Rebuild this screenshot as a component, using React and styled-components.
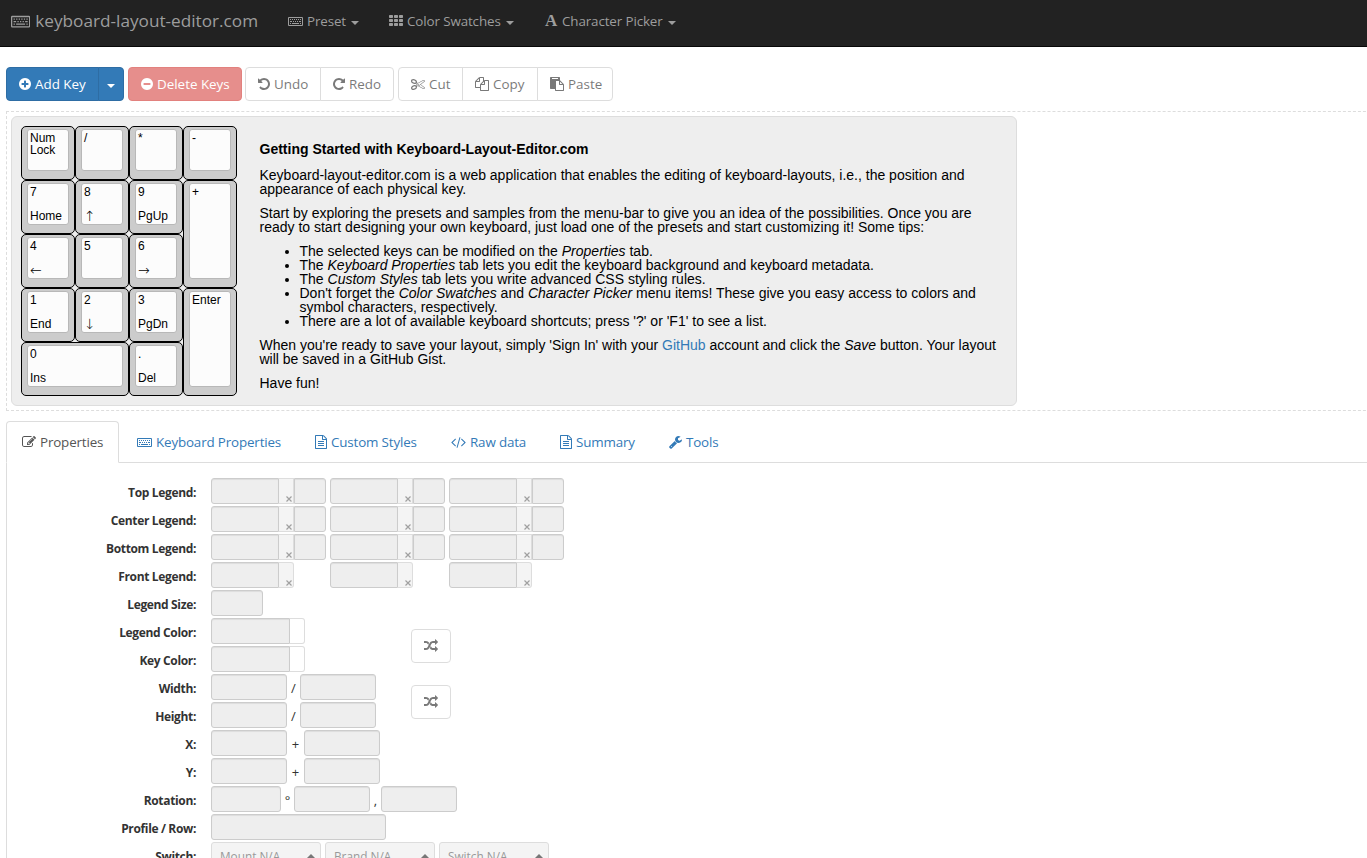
import React from 'react';
import styled, { createGlobalStyle, css } from 'styled-components';

const Global = createGlobalStyle`
  *, *::before, *::after { box-sizing: border-box; }
  html, body { margin: 0; height: 858px; overflow: hidden; background: #fff; }
  body {
    font-family: 'Open Sans', 'Noto Sans', sans-serif;
    font-size: 13.4px;
    line-height: 20px;
    color: #333;
  }
`;

const Page = styled.div`
  height: 858px;
  overflow: hidden;
`;

const Glyph = styled.svg`
  display: block;
  flex: none;
  fill: currentColor;
`;

const DISC =
  'm320-64q0 209-103 385.5t-279.5 279.5-385.5 103-385.5-103-279.5-279.5-103-385.5 103-385.5 279.5-279.5 385.5-103 385.5 103 279.5 279.5 103 385.5z';

/* [left edge, width, path] in a 1792-unit em */
const ICONS = {
  plus: [128, 1536, 'M1344 960v-128q0-26-19-45t-45-19h-256v-256q0-26-19-45t-45-19h-128q-26 0-45 19t-19 45v256h-256q-26 0-45 19t-19 45v128q0 26 19 45t45 19h256v256q0 26 19 45t45 19h128q26 0 45-19t19-45v-256h256q26 0 45-19t19-45z' + DISC],
  minus: [128, 1536, 'M1344 960v-128q0-26-19-45t-45-19h-768q-26 0-45 19t-19 45v128q0 26 19 45t45 19h768q26 0 45-19t19-45z' + DISC],
  undo: [128, 1536, 'M1664 896q0 156-61 298t-164 245-245 164-298 61q-172 0-327-72.5t-264-204.5q-7-10-6.5-22.5t8.5-20.5l137-138q10-9 25-9 16 2 23 12 73 95 179 147t225 52q104 0 198.5-40.5t163.5-109.5 109.5-163.5 40.5-198.5-40.5-198.5-109.5-163.5-163.5-109.5-198.5-40.5q-98 0-188 35.5t-160 101.5l137 138q31 30 14 69-17 40-59 40h-448q-26 0-45-19t-19-45v-448q0-42 40-59 39-17 69 14l130 129q107-101 244.5-156.5t284.5-55.5q156 0 298 61t245 164 164 245 61 298z'],
  redo: [128, 1536, 'M1664 256v448q0 26-19 45t-45 19h-448q-42 0-59-40-17-39 14-69l138-138q-148-137-349-137-104 0-198.5 40.5t-163.5 109.5-109.5 163.5-40.5 198.5 40.5 198.5 109.5 163.5 163.5 109.5 198.5 40.5q119 0 225-52t179-147q7-10 23-12 15 0 25 9l137 138q9 8 9.5 20.5t-7.5 22.5q-109 132-264 204.5t-327 72.5q-156 0-298-61t-245-164-164-245-61-298 61-298 164-245 245-164 298-61q147 0 284.5 55.5t244.5 156.5l130-129q29-31 70-14 39 17 39 59z'],
  cut: [0, 1792, 'M960 896q26 0 45 19t19 45-19 45-45 19-45-19-19-45 19-45 45-19zm300 64l507 398q28 20 25 56-5 35-35 51l-128 64q-13 7-29 7-17 0-31-8l-690-387-110 66q-8 4-12 5 14 49 10 97-7 77-56 147.5t-132 123.5q-132 84-277 84-136 0-222-78-90-84-79-207 7-76 56-147t131-124q132-84 278-84 83 0 151 31 9-13 22-22l122-73-122-73q-13-9-22-22-68 31-151 31-146 0-278-84-82-53-131-124t-56-147q-5-59 15.5-113t63.5-93q85-79 222-79 145 0 277 84 83 52 132 123t56 148q4 48-10 97 4 1 12 5l110 66 690-387q14-8 31-8 16 0 29 7l128 64q30 16 35 51 3 36-25 56zm-681-260q46-42 21-108t-106-117q-92-59-192-59-74 0-113 36-46 42-21 108t106 117q92 59 192 59 74 0 113-36zm-85 745q81-51 106-117t-21-108q-39-36-113-36-100 0-192 59-81 51-106 117t21 108q39 36 113 36 100 0 192-59zm178-613l96 58v-11q0-36 33-56l14-8-79-44-26 26q-3 3-10 11t-12 12q-2 2-4 3.5t-3 2.5zm224 224l96 32 736-576-128-64-768 431v113l-160 96 9 8q2 2 7 6 4 4 11 12t11 12l26 26zm704 416l128-64-520-408-177 138q-2 3-13 7z'],
  copy: [0, 1792, 'M1696 384q40 0 68 28t28 68v1216q0 40-28 68t-68 28h-960q-40 0-68-28t-28-68v-288h-544q-40 0-68-28t-28-68v-672q0-40 20-88t48-76l408-408q28-28 76-48t88-20h416q40 0 68 28t28 68v328q68-40 128-40h416zm-544 213l-299 299h299v-299zm-640-384l-299 299h299v-299zm196 647l316-316v-416h-384v416q0 40-28 68t-68 28h-416v640h512v-256q0-40 20-88t48-76zm956 804v-1152h-384v416q0 40-28 68t-68 28h-416v640h896z'],
  paste: [0, 1792, 'M768 1664h896v-640h-416q-40 0-68-28t-28-68v-416h-384v1152zm256-1440v-64q0-13-9.5-22.5t-22.5-9.5h-704q-13 0-22.5 9.5t-9.5 22.5v64q0 13 9.5 22.5t22.5 9.5h704q13 0 22.5-9.5t9.5-22.5zm256 672h299l-299-299v299zm512 128v672q0 40-28 68t-68 28h-960q-40 0-68-28t-28-68v-160h-544q-40 0-68-28t-28-68v-1344q0-40 28-68t68-28h1088q40 0 68 28t28 68v328q21 13 36 28l408 408q28 28 48 76t20 88z'],
  shuffle: [0, 1792, 'M666 481q-60 92-137 273-22-45-37-72.5t-40.5-63.5-51-56.5-63-35-81.5-14.5h-224q-14 0-23-9t-9-23v-192q0-14 9-23t23-9h224q250 0 410 225zm1126 799q0 14-9 23l-320 320q-9 9-23 9-13 0-22.5-9.5t-9.5-22.5v-192q-32 0-85 .5t-81 1-73-1-71-5-64-10.5-63-18.5-58-28.5-59-40-55-53.5-56-69.5q59-93 136-273 22 45 37 72.5t40.5 63.5 51 56.5 63 35 81.5 14.5h256v-192q0-14 9-23t23-9q12 0 24 10l319 319q9 9 9 23zm0-896q0 14-9 23l-320 320q-9 9-23 9-13 0-22.5-9.5t-9.5-22.5v-192h-256q-48 0-87 15t-69 45-51 61.5-45 77.5q-32 62-78 171-29 66-49.5 111t-54 105-64 100-74 83-90 68.5-106.5 42-128 16.5h-224q-14 0-23-9t-9-23v-192q0-14 9-23t23-9h224q48 0 87-15t69-45 51-61.5 45-77.5q32-62 78-171 29-66 49.5-111t54-105 64-100 74-83 90-68.5 106.5-42 128-16.5h256v-192q0-14 9-23t23-9q12 0 24 10l319 319q9 9 9 23z'],
  edit: [0, 1792, 'M888 1184l116-116-152-152-116 116v56h96v96h56zm440-720q-16-16-33 1l-350 350q-17 17-1 33t33-1l350-350q17-17 1-33zm80 594v190q0 119-84.5 203.5t-203.5 84.5h-832q-119 0-203.5-84.5t-84.5-203.5v-832q0-119 84.5-203.5t203.5-84.5h832q63 0 117 25 15 7 18 23 3 17-9 29l-49 49q-14 14-32 8-23-6-45-6h-832q-66 0-113 47t-47 113v832q0 66 47 113t113 47h832q66 0 113-47t47-113v-126q0-13 9-22l64-64q15-15 35-7t20 29zm-96-738l288 288-672 672h-288v-288zm444 132l-92 92-288-288 92-92q28-28 68-28t68 28l152 152q28 28 28 68t-28 68z'],
  file: [128, 1536, 'M1596 380q28 28 48 76t20 88v1152q0 40-28 68t-68 28h-1344q-40 0-68-28t-28-68v-1600q0-40 28-68t68-28h896q40 0 88 20t76 48zm-444-244v376h376q-10-29-22-41l-313-313q-12-12-41-22zm384 1528v-1024h-416q-40 0-68-28t-28-68v-416h-768v1536h1280zm-1024-864q0-14 9-23t23-9h704q14 0 23 9t9 23v64q0 14-9 23t-23 9h-704q-14 0-23-9t-9-23v-64zm736 224q14 0 23 9t9 23v64q0 14-9 23t-23 9h-704q-14 0-23-9t-9-23v-64q0-14 9-23t23-9h704zm0 256q14 0 23 9t9 23v64q0 14-9 23t-23 9h-704q-14 0-23-9t-9-23v-64q0-14 9-23t23-9h704z'],
  code: [0, 1920, 'M617 1399l-50 50q-10 10-23 10t-23-10l-466-466q-10-10-10-23t10-23l466-466q10-10 23-10t23 10l50 50q10 10 10 23t-10 23l-393 393 393 393q10 10 10 23t-10 23zm591-1067l-373 1291q-4 13-15.5 19.5t-23.5 2.5l-62-17q-13-4-19.5-15.5t-2.5-24.5l373-1291q4-13 15.5-19.5t23.5-2.5l62 17q13 4 19.5 15.5t2.5 24.5zm657 651l-466 466q-10 10-23 10t-23-10l-50-50q-10-10-10-23t10-23l393-393-393-393q-10-10-10-23t10-23l50-50q10-10 23-10t23 10l466 466q10 10 10 23t-10 23z'],
  wrench: [64, 1664, 'M448 1472q0-26-19-45t-45-19-45 19-19 45 19 45 45 19 45-19 19-45zm644-420l-682 682q-37 37-90 37-52 0-91-37l-106-108q-38-36-38-90 0-53 38-91l681-681q39 98 114.5 173.5t173.5 114.5zm634-435q0 39-23 106-47 134-164.5 217.5t-258.5 83.5q-185 0-316.5-131.5t-131.5-316.5 131.5-316.5 316.5-131.5q58 0 121.5 16.5t107.5 46.5q16 11 16 28t-16 28l-293 169v224l193 107q5-3 79-48.5t135.5-81 70.5-35.5q15 0 23.5 10t8.5 25z'],
  grid: [0, 1792, 'M96 128h320a96 96 0 0 1 96 96v192a96 96 0 0 1-96 96h-320a96 96 0 0 1-96-96v-192a96 96 0 0 1 96-96zm640 0h320a96 96 0 0 1 96 96v192a96 96 0 0 1-96 96h-320a96 96 0 0 1-96-96v-192a96 96 0 0 1 96-96zm640 0h320a96 96 0 0 1 96 96v192a96 96 0 0 1-96 96h-320a96 96 0 0 1-96-96v-192a96 96 0 0 1 96-96zM96 640h320a96 96 0 0 1 96 96v192a96 96 0 0 1-96 96h-320a96 96 0 0 1-96-96v-192a96 96 0 0 1 96-96zm640 0h320a96 96 0 0 1 96 96v192a96 96 0 0 1-96 96h-320a96 96 0 0 1-96-96v-192a96 96 0 0 1 96-96zm640 0h320a96 96 0 0 1 96 96v192a96 96 0 0 1-96 96h-320a96 96 0 0 1-96-96v-192a96 96 0 0 1 96-96zM96 1152h320a96 96 0 0 1 96 96v192a96 96 0 0 1-96 96h-320a96 96 0 0 1-96-96v-192a96 96 0 0 1 96-96zm640 0h320a96 96 0 0 1 96 96v192a96 96 0 0 1-96 96h-320a96 96 0 0 1-96-96v-192a96 96 0 0 1 96-96zm640 0h320a96 96 0 0 1 96 96v192a96 96 0 0 1-96 96h-320a96 96 0 0 1-96-96v-192a96 96 0 0 1 96-96z'],
  keyboard: [0, 1920, 'M128 384h1664a128 128 0 0 1 128 128v896a128 128 0 0 1-128 128h-1664a128 128 0 0 1-128-128v-896a128 128 0 0 1 128-128zm0 128v896h1664v-896zM256 1152h128v128h-128zM512 1152h896v128h-896zM1536 1152h128v128h-128zM256 896h256v128h-256zM640 896h128v128h-128zM896 896h128v128h-128zM1152 896h128v128h-128zM1408 896h256v128h-256zM256 640h128v128h-128zM512 640h128v128h-128zM768 640h128v128h-128zM1024 640h128v128h-128zM1280 640h128v128h-128zM1536 640h128v128h-128z'],
};

function Icon({ name, size = 14 }) {
  const [x, w, d] = ICONS[name];
  return (
    <Glyph width={(w / 1792) * size} height={size} viewBox={`${x} 0 ${w} 1792`}>
      <path d={d} fillRule={name === 'keyboard' ? 'evenodd' : 'nonzero'} />
    </Glyph>
  );
}

const Caret = styled.span`
  flex: none;
  width: 0;
  height: 0;
  border: 4px solid transparent;
  ${(p) => (p.$up
    ? css`border-top: 0; border-bottom-color: #777;`
    : css`border-bottom: 0; border-top-color: currentColor;`)}
`;

/* Navigation bar */
const Navbar = styled.nav`
  display: flex;
  align-items: center;
  height: 47px;
  padding: 0 0 4px 11px;
  background: #222;
  border-bottom: 1px solid #080808;
  color: #9d9d9d;
`;

const Brand = styled.a`
  display: flex;
  align-items: center;
  gap: 5px;
  width: 277px;
  font-size: 17.2px;
  white-space: nowrap;
`;

const NavItem = styled.a`
  display: flex;
  align-items: center;
  gap: 4px;
  width: ${(p) => p.$w}px;
  letter-spacing: -0.12px;
  white-space: nowrap;
  ${Caret} { margin: 3px 0 0 1px; }
`;

const LetterIcon = styled.span`
  width: 13px;
  font: bold 17px/20px 'Liberation Serif', serif;
`;

/* Toolbar */
const Toolbar = styled.div`
  display: flex;
  padding: 20px 0 10px 6px;
`;

const Group = styled.div`
  display: flex;
  margin-right: ${(p) => p.$gap}px;
  opacity: ${(p) => (p.$disabled ? 0.65 : 1)};
`;

const tones = {
  primary: css`color: #fff; background: #337ab7; border-color: #2e6da4;`,
  danger: css`color: #fff; background: #d9534f; border-color: #d43f3a;`,
  plain: css`color: #333; background: #fff; border-color: #ccc;`,
};

const Button = styled.button`
  display: flex;
  align-items: center;
  justify-content: ${(p) => (p.$center ? 'center' : 'flex-start')};
  gap: 4px;
  width: ${(p) => p.$w}px;
  height: 34px;
  padding: ${(p) => (p.$center ? '0' : '0 0 0 12px')};
  border: 1px solid;
  border-radius: 0;
  font: inherit;
  white-space: nowrap;
  ${(p) => tones[p.$tone || 'plain']}
  &:first-child { border-top-left-radius: 4px; border-bottom-left-radius: 4px; }
  &:last-child { border-top-right-radius: 4px; border-bottom-right-radius: 4px; }
  & + & { margin-left: -1px; }
  ${Caret} { margin-top: 3px; }
`;

/* Keyboard preview */
const Preview = styled.section`
  margin-left: 6px;
  width: 1400px;
  padding: 4px;
  border: 1px dashed #ddd;
`;

const Board = styled.div`
  display: flex;
  width: 1006px;
  height: 290px;
  padding: 9px;
  border: 1px solid #ddd;
  border-radius: 6px;
  background: #eee;
  color: #000;
  font-family: 'Liberation Sans', Arial, sans-serif;
`;

const Keys = styled.div`
  flex: none;
  display: grid;
  grid-template-columns: repeat(4, 54px);
  grid-template-rows: repeat(5, 54px);
`;

const Key = styled.div`
  grid-column: span ${(p) => p.$cols || 1};
  grid-row: span ${(p) => p.$rows || 1};
  padding: 2px 5px 8px;
  border: 1px solid #000;
  border-radius: 5px;
  background: #ccc;
`;

const Cap = styled.div`
  display: flex;
  flex-direction: column;
  justify-content: space-between;
  height: 100%;
  padding: 2px 0 2px 2px;
  border: 1px solid #b8b8b8;
  border-radius: 3px;
  background: #fcfcfc;
  font-size: 12px;
  line-height: 12px;
  white-space: pre-line;
`;

const Arrow = styled.span`
  font-family: 'DejaVu Sans', sans-serif;
  font-size: 14px;
  font-weight: 200;
  line-height: 12px;
`;

const Intro = styled.article`
  margin: 16px 0 0 22.5px;
  width: 745px;
  font-size: 14px;
  line-height: 14px;
  h4 { margin: 0 0 12px; font-size: 14px; line-height: 14px; }
  p { margin: 0 0 10px; }
  ul { margin: 0 0 10px; padding-left: 40px; }
  a { color: #337ab7; }
`;

/* Tabs */
const Tabs = styled.div`
  display: flex;
  gap: 2px;
  margin: 10px 0 0 6px;
  border-bottom: 1px solid #ddd;
`;

const Tab = styled.a`
  display: flex;
  align-items: center;
  gap: 4px;
  width: ${(p) => p.$w}px;
  height: 42px;
  margin-bottom: -1px;
  padding-left: 15px;
  border: 1px solid transparent;
  border-radius: 4px 4px 0 0;
  color: #337ab7;
  letter-spacing: -0.16px;
  white-space: nowrap;
  ${(p) => p.$active && css`
    color: #555;
    background: #fff;
    border-color: #ddd #ddd #fff;
  `}
`;

/* Properties form */
const Pane = styled.form`
  display: flex;
  flex-direction: column;
  gap: 2px;
  margin-left: 6px;
  padding-top: 15px;
  border-left: 1px solid #ddd;
`;

const Row = styled.div`
  display: flex;
  height: 26px;
`;

const Label = styled.label`
  width: 189px;
  margin-right: 15px;
  padding-top: 5px;
  font-size: 12px;
  line-height: 20px;
  font-weight: 700;
  letter-spacing: -0.35px;
  text-align: right;
  white-space: nowrap;
`;

const Field = styled.div`
  width: ${(p) => p.$w}px;
  height: 26px;
  border: 1px solid #ccc;
  border-radius: ${(p) => p.$r || '3px'};
  background: #eee;
  box-shadow: inset 0 1px 1px rgba(0, 0, 0, 0.075);
`;

const Clear = styled.div`
  display: flex;
  align-items: flex-end;
  justify-content: flex-end;
  width: 15px;
  height: 26px;
  padding: 0 1px 1px 0;
  border: 1px solid #ddd;
  border-left: 0;
  border-radius: ${(p) => (p.$last ? '0 3px 3px 0' : '0')};
  background: #f4f4f4;
`;

const Cross = styled.svg`
  display: block;
  stroke: #a0a0a0;
  stroke-width: 1.2;
`;

const LegendGroup = styled.div`
  display: flex;
  width: 119px;
`;

const Swatch = styled.div`
  width: 15px;
  height: 26px;
  border: 1px solid #ddd;
  border-left: 0;
  border-radius: 0 3px 3px 0;
  background: #fff;
`;

const Sep = styled.span`
  width: ${(p) => p.$w}px;
  padding-top: 4px;
  text-align: center;
  line-height: 20px;
  font-size: 13px;
`;

const PairBlock = styled.div`
  display: flex;
  align-items: center;
  ${Group} { padding-top: 2px; }
`;

const PairRows = styled.div`
  display: flex;
  flex-direction: column;
  gap: 2px;
  width: 404px;
`;

const Choice = styled.div`
  display: flex;
  justify-content: space-between;
  width: 110px;
  height: 30px;
  margin-right: 4px;
  padding: 3px 4px 0 8px;
  border: 1px solid #ddd;
  border-radius: 3px;
  background: #f4f4f4;
  color: #999;
  font-size: 11.8px;
  ${Caret} { margin-top: 8px; border-width: 0 5px 5px; }
`;

const keys = [
  ['Num\nLock'], ['/'], ['*'], ['-'],
  ['7', 'Home'], ['8', '↑'], ['9', 'PgUp'], ['+', '', 1, 2],
  ['4', '←'], ['5'], ['6', '→'],
  ['1', 'End'], ['2', '↓'], ['3', 'PgDn'], ['Enter', '', 1, 2],
  ['0', 'Ins', 2], ['.', 'Del'],
];

function KeyLegend({ text }) {
  return '↑↓←→'.includes(text) ? <Arrow>{text}</Arrow> : <span>{text}</span>;
}

function Legend({ label, front }) {
  return (
    <Row>
      <Label>{label}</Label>
      {[0, 1, 2].map((i) => (
        <LegendGroup key={i}>
          <Field $w={68} $r="3px 0 0 3px" />
          <Clear $last={front}>
            <Cross width="6" height="6" viewBox="0 0 6 6"><path d="M0.5 0.5L5.5 5.5M5.5 0.5L0.5 5.5" /></Cross>
          </Clear>
          {!front && <Field $w={32} $r="0 3px 3px 0" />}
        </LegendGroup>
      ))}
    </Row>
  );
}

function ColorRow({ label }) {
  return (
    <Row>
      <Label>{label}</Label>
      <Field $w={79} $r="3px 0 0 3px" />
      <Swatch />
    </Row>
  );
}

function Pair({ label, sep, gap }) {
  return (
    <Row>
      <Label>{label}</Label>
      <Field $w={76} />
      <Sep $w={gap}>{sep}</Sep>
      <Field $w={76} />
    </Row>
  );
}

function Swappable({ children }) {
  return (
    <PairBlock>
      <PairRows>{children}</PairRows>
      <Group $gap={0} $disabled>
        <Button type="button" $w={40} $center><Icon name="shuffle" /></Button>
      </Group>
    </PairBlock>
  );
}

export default function App() {
  return (
    <Page>
      <Global />
      <Navbar>
        <Brand><Icon name="keyboard" size={18} />keyboard-layout-editor.com</Brand>
        <NavItem $w={101}><Icon name="keyboard" />Preset<Caret /></NavItem>
        <NavItem $w={156}><Icon name="grid" />Color Swatches<Caret /></NavItem>
        <NavItem $w={140}><LetterIcon>A</LetterIcon>Character Picker<Caret /></NavItem>
      </Navbar>

      <Toolbar>
        <Group $gap={4}>
          <Button $tone="primary" $w={93}><Icon name="plus" />Add Key</Button>
          <Button $tone="primary" $w={26} $center><Caret /></Button>
        </Group>
        <Group $gap={3} $disabled>
          <Button $tone="danger" $w={114}><Icon name="minus" />Delete Keys</Button>
        </Group>
        <Group $gap={4} $disabled>
          <Button $w={76}><Icon name="undo" />Undo</Button>
          <Button $w={74}><Icon name="redo" />Redo</Button>
        </Group>
        <Group $gap={0} $disabled>
          <Button $w={65}><Icon name="cut" />Cut</Button>
          <Button $w={76}><Icon name="copy" />Copy</Button>
          <Button $w={76}><Icon name="paste" />Paste</Button>
        </Group>
      </Toolbar>

      <Preview>
        <Board>
          <Keys>
            {keys.map(([top, bottom, cols, rows]) => (
              <Key key={top} $cols={cols} $rows={rows}>
                <Cap><span>{top}</span>{bottom && <KeyLegend text={bottom} />}</Cap>
              </Key>
            ))}
          </Keys>
          <Intro>
            <h4>Getting Started with Keyboard-Layout-Editor.com</h4>
            <p>Keyboard-layout-editor.com is a web application that enables the editing of keyboard-layouts, i.e., the position and<br />appearance of each physical key.</p>
            <p>Start by exploring the presets and samples from the menu-bar to give you an idea of the possibilities. Once you are<br />ready to start designing your own keyboard, just load one of the presets and start customizing it! Some tips:</p>
            <ul>
              <li>The selected keys can be modified on the <i>Properties</i> tab.</li>
              <li>The <i>Keyboard Properties</i> tab lets you edit the keyboard background and keyboard metadata.</li>
              <li>The <i>Custom Styles</i> tab lets you write advanced CSS styling rules.</li>
              <li>Don't forget the <i>Color Swatches</i> and <i>Character Picker</i> menu items! These give you easy access to colors and<br />symbol characters, respectively.</li>
              <li>There are a lot of available keyboard shortcuts; press '?' or 'F1' to see a list.</li>
            </ul>
            <p>When you're ready to save your layout, simply 'Sign In' with your <a>GitHub</a> account and click the <i>Save</i> button. Your layout<br />will be saved in a GitHub Gist.</p>
            <p>Have fun!</p>
          </Intro>
        </Board>
      </Preview>

      <Tabs>
        <Tab $w={113} $active><Icon name="edit" />Properties</Tab>
        <Tab $w={176}><Icon name="keyboard" />Keyboard Properties</Tab>
        <Tab $w={134}><Icon name="file" />Custom Styles</Tab>
        <Tab $w={107}><Icon name="code" />Raw data</Tab>
        <Tab $w={107}><Icon name="file" />Summary</Tab>
        <Tab $w={81}><Icon name="wrench" />Tools</Tab>
      </Tabs>

      <Pane>
        <Legend label="Top Legend:" />
        <Legend label="Center Legend:" />
        <Legend label="Bottom Legend:" />
        <Legend label="Front Legend:" front />
        <Row><Label>Legend Size:</Label><Field $w={52} /></Row>
        <Swappable>
          <ColorRow label="Legend Color:" />
          <ColorRow label="Key Color:" />
        </Swappable>
        <Swappable>
          <Pair label="Width:" sep="/" gap={13} />
          <Pair label="Height:" sep="/" gap={13} />
        </Swappable>
        <Pair label="X:" sep="+" gap={17} />
        <Pair label="Y:" sep="+" gap={17} />
        <Row>
          <Label>Rotation:</Label>
          <Field $w={70} /><Sep $w={13}>°</Sep>
          <Field $w={76} /><Sep $w={11}>,</Sep>
          <Field $w={76} />
        </Row>
        <Row><Label>Profile / Row:</Label><Field $w={175} /></Row>
        <Row>
          <Label>Switch:</Label>
          <Choice>Mount N/A<Caret $up /></Choice>
          <Choice>Brand N/A<Caret $up /></Choice>
          <Choice>Switch N/A<Caret $up /></Choice>
        </Row>
      </Pane>
    </Page>
  );
}
